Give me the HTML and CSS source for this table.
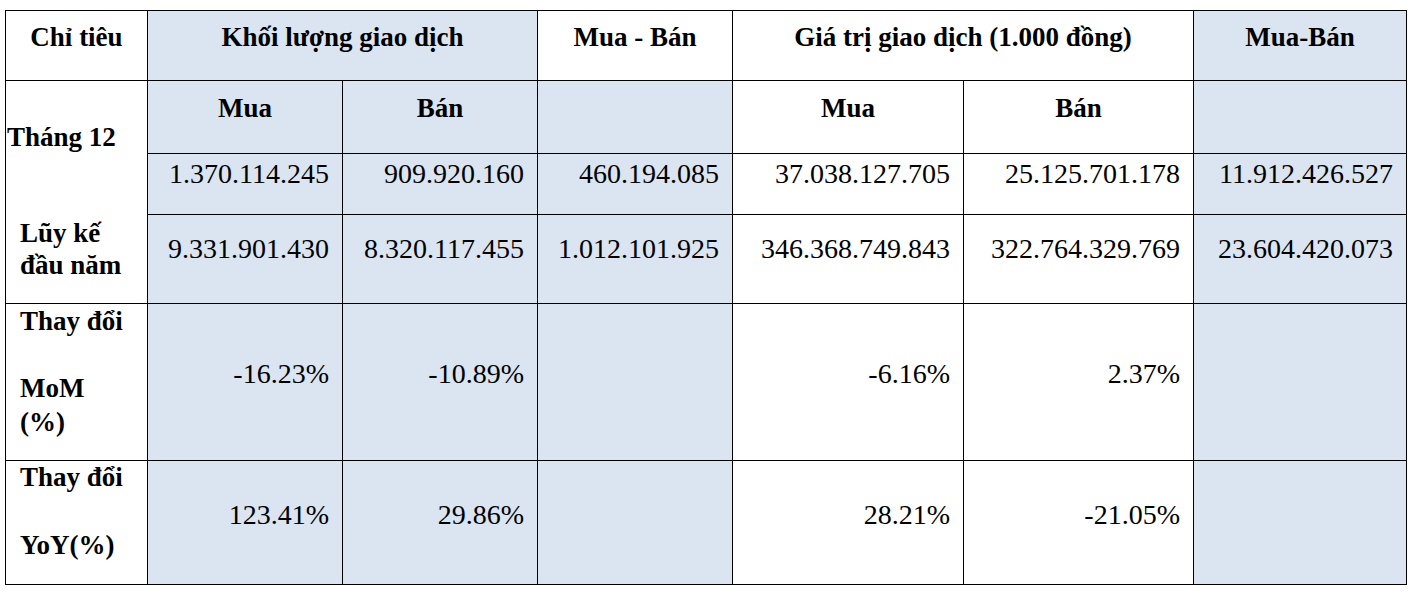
FILE: index.html
```html
<!DOCTYPE html>
<html lang="vi">
<head>
<meta charset="utf-8">
<title>Bảng giao dịch</title>
<link rel="stylesheet" href="styles.css">
</head>
<body>
<table class="tbl">
  <colgroup>
    <col class="c1"><col class="c2"><col class="c3"><col class="c4"><col class="c5"><col class="c6"><col class="c7">
  </colgroup>
  <tr class="r1">
    <td class="h">Chỉ tiêu</td>
    <td class="h b" colspan="2">Khối lượng giao dịch</td>
    <td class="h">Mua - Bán</td>
    <td class="h" colspan="2">Giá trị giao dịch (1.000 đồng)</td>
    <td class="h b">Mua-Bán</td>
  </tr>
  <tr class="r2">
    <td class="lbl" rowspan="3">
      <div class="thang">Tháng 12</div>
      <div class="luyke">Lũy kế<br>đầu năm</div>
    </td>
    <td class="h b">Mua</td>
    <td class="h b">Bán</td>
    <td class="b"></td>
    <td class="h">Mua</td>
    <td class="h">Bán</td>
    <td class="b"></td>
  </tr>
  <tr class="r3">
    <td class="n b">1.370.114.245</td>
    <td class="n b">909.920.160</td>
    <td class="n b">460.194.085</td>
    <td class="n">37.038.127.705</td>
    <td class="n">25.125.701.178</td>
    <td class="n b">11.912.426.527</td>
  </tr>
  <tr class="r4">
    <td class="n b">9.331.901.430</td>
    <td class="n b">8.320.117.455</td>
    <td class="n b">1.012.101.925</td>
    <td class="n">346.368.749.843</td>
    <td class="n">322.764.329.769</td>
    <td class="n b">23.604.420.073</td>
  </tr>
  <tr class="r5">
    <td class="lbl">
      <div class="l1">Thay đổi</div>
      <div class="mom">MoM</div>
      <div class="pct">(%)</div>
    </td>
    <td class="n b">-16.23%</td>
    <td class="n b">-10.89%</td>
    <td class="b"></td>
    <td class="n">-6.16%</td>
    <td class="n">2.37%</td>
    <td class="b"></td>
  </tr>
  <tr class="r6">
    <td class="lbl">
      <div class="l1">Thay đổi</div>
      <div class="yoy">YoY(%)</div>
    </td>
    <td class="n b">123.41%</td>
    <td class="n b">29.86%</td>
    <td class="b"></td>
    <td class="n">28.21%</td>
    <td class="n">-21.05%</td>
    <td class="b"></td>
  </tr>
</table>
</body>
</html>
```
FILE: styles.css
```css
html, body {
  margin: 0;
  background: #ffffff;
}
body {
  padding: 10px 0 0 5px;
  font-family: "Liberation Serif", serif;
  color: #000000;
}
.tbl {
  border-collapse: collapse;
  table-layout: fixed;
  width: 1402px;
  font-family: "Liberation Serif", serif;
}
.c1 { width: 142px; }
.c2 { width: 195px; }
.c3 { width: 195px; }
.c4 { width: 195px; }
.c5 { width: 231px; }
.c6 { width: 230px; }
.c7 { width: 213px; }
.tbl td {
  border: 1px solid #000000;
  padding: 0;
  vertical-align: top;
  font-family: "Liberation Serif", serif;
  font-size: 28px;
  line-height: 32px;
  background: #ffffff;
}
.tbl td.b { background: #dbe5f1; }
.tbl td.h {
  font-weight: bold;
  font-size: 27px;
  text-align: center;
}
.tbl td.n {
  text-align: right;
  padding-right: 13px;
}
.tbl td.lbl {
  font-weight: bold;
  font-size: 27px;
  padding-left: 14px;
}
.r1 { height: 70px; }
.r2 { height: 73px; }
.r3 { height: 61px; }
.r4 { height: 89px; }
.r5 { height: 157px; }
.r6 { height: 124px; }
.r1 td { padding-top: 10px; }
.r2 td.h { padding-top: 11px; }
.r3 td.n { padding-top: 4px; }
.r4 td.n { padding-top: 18px; }
.r5 td.n { padding-top: 54px; }
.r6 td.n { padding-top: 38px; }
.thang {
  margin-top: 40px;
  margin-left: -13px;
}
.luyke { margin-top: 64px; }
.r5 td.lbl { padding-top: 1px; }
.r6 td.lbl { padding-top: 0; }
.mom { margin-top: 35px; }
.pct { margin-top: 2px; }
.yoy { margin-top: 36px; }
```
